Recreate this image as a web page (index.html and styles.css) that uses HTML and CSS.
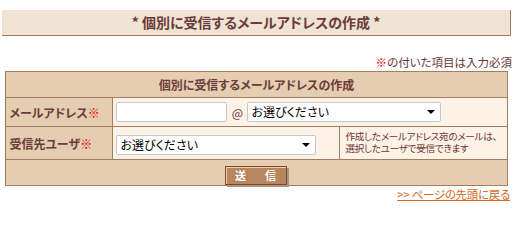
FILE: index.html
```html
<!DOCTYPE html>
<html lang="ja">
<head>
<meta charset="utf-8">
<title>個別に受信するメールアドレスの作成</title>
<link rel="stylesheet" href="styles.css">
</head>
<body>
<div class="page">
  <h1 class="title">* 個別に受信するメールアドレスの作成 *</h1>
  <p class="note"><span class="req">※</span>の付いた項目は入力必須</p>
  <table class="form">
    <colgroup>
      <col class="c-label">
      <col class="c-value">
      <col class="c-desc">
    </colgroup>
    <tr>
      <th colspan="3" class="head">個別に受信するメールアドレスの作成</th>
    </tr>
    <tr class="r1">
      <th class="label">メールアドレス<span class="req">※</span></th>
      <td colspan="2" class="value">
        <div class="inline">
          <input type="text" class="txt">
          <span class="at">@</span>
          <select class="sel wide"><option>お選びください</option></select>
        </div>
      </td>
    </tr>
    <tr class="r2">
      <th class="label">受信先ユーザ<span class="req">※</span></th>
      <td class="value"><select class="sel mid"><option>お選びください</option></select></td>
      <td class="desc"><span class="line">作成したメールアドレス宛のメールは、</span><span class="line">選択したユーザで受信できます</span></td>
    </tr>
    <tr class="r3">
      <td colspan="3" class="foot"><button class="btn" type="button">送　信</button></td>
    </tr>
  </table>
  <p class="back"><a href="#">&gt;&gt; ページの先頭に戻る</a></p>
</div>
</body>
</html>
```
FILE: styles.css
```css
html, body {
  margin: 0;
  padding: 0;
  background: #ffffff;
}
body {
  font-family: "Noto Sans CJK JP", "Noto Sans", sans-serif;
  font-feature-settings: "palt";
  color: #6b3535;
}
.page {
  width: 509px;
  margin-left: 2px;
  padding-top: 10px;
}
.title {
  margin: 0;
  height: 25px;
  line-height: 25px;
  background: #f0e3d4;
  border-right: 1px solid #a67c5e;
  border-bottom: 1px solid #a67c5e;
  text-align: center;
  font-size: 14px;
  font-weight: bold;
  color: #6b3c3c;
}
.note {
  margin: 0;
  padding-top: 17px;
  height: 18px;
  line-height: 18px;
  text-align: right;
  font-size: 11.5px;
  color: #6b3535;
  margin-right: -1px;
}
.req {
  color: #e00000;
}
.form {
  width: 501px;
  margin: 0 auto;
  border-collapse: collapse;
  border: 1px solid #a67c5e;
  table-layout: fixed;
}
.c-label { width: 107px; }
.c-value { width: 227px; }
.c-desc { width: 167px; }
.form th, .form td {
  border: 1px solid #a67c5e;
  padding: 0;
}
.head {
  height: 25px;
  background: #e4cdb0;
  font-size: 12px;
  font-weight: bold;
  text-align: center;
  color: #6b3c3c;
}
.label {
  padding-left: 3px !important;
  background: #e4cdb0;
  text-align: left;
  font-size: 12px;
  font-weight: bold;
  color: #6b3c3c;
  white-space: nowrap;
}
.value {
  background: #fdf2e6;
  padding-left: 3px !important;
  vertical-align: middle;
}
.r1 td, .r1 th { height: 28px; }
.r2 td, .r2 th { height: 32px; }
.inline {
  display: flex;
  align-items: center;
}
.txt {
  box-sizing: border-box;
  width: 111px;
  height: 20px;
  margin: 0;
  border: 1px solid #c4c8cc;
  border-radius: 2px;
  background: #ffffff;
  padding: 0 3px;
}
.at {
  width: 20px;
  text-align: center;
  font-size: 12px;
  color: #6b3535;
}
.sel {
  box-sizing: border-box;
  appearance: none;
  -webkit-appearance: none;
  height: 20px;
  margin: 0;
  border: 1px solid #c4c8cc;
  border-radius: 2px;
  background: #ffffff url("data:image/svg+xml;utf8,<svg xmlns='http://www.w3.org/2000/svg' width='8' height='4'><polygon points='0,0 8,0 4,4' fill='black'/></svg>") no-repeat right 5px center;
  padding: 0 0 0 3px;
  font-family: "Noto Sans CJK JP", sans-serif;
  font-feature-settings: "palt";
  font-size: 12px;
  line-height: 18px;
  color: #000000;
}
.wide { width: 194px; }
.mid { width: 200px; }
.desc {
  background: #fdf2e6;
  padding: 0 0 0 5px !important;
  font-family: "Liberation Sans", "Noto Sans CJK JP", sans-serif;
  font-size: 9.6px;
  letter-spacing: -0.3px;
  color: #6b3535;
  vertical-align: middle;
}
.line {
  display: block;
  height: 12px;
  line-height: 12px;
  white-space: nowrap;
}
.foot {
  height: 25px;
  background: #e4cdb0;
  text-align: center;
  vertical-align: middle;
}
.btn {
  box-sizing: border-box;
  width: 62px;
  height: 19px;
  margin: 2px 0 0 -2px;
  padding: 0;
  border: 1px solid #7b4a26;
  background: #b8865e;
  box-shadow: 1px 1px 0 #e8cfb4 inset, 2px 2px 0 #a89484;
  color: #ffffff;
  font-family: "Noto Sans CJK JP", sans-serif;
  font-size: 11px;
  font-weight: bold;
  line-height: 17px;
  letter-spacing: 4px;
  text-indent: 4px;
}
.back {
  margin: 0;
  margin-top: 1px;
  text-align: right;
  font-size: 11.5px;
  letter-spacing: -0.3px;
  line-height: 15px;
  padding-right: 1px;
}
.back a {
  color: #d2691e;
  text-decoration: underline;
}
```
